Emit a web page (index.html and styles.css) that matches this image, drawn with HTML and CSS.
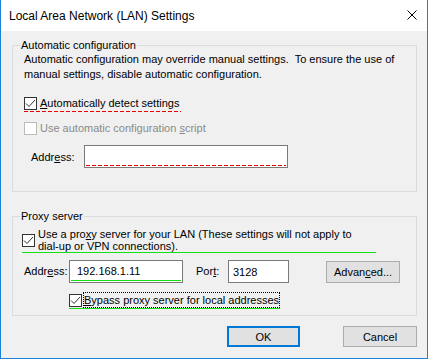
FILE: index.html
```html
<!DOCTYPE html>
<html lang="en">
<head>
    <meta charset="UTF-8">
    <title>Local Area Network (LAN) Settings</title>
    <link rel="stylesheet" href="styles.css">
</head>
<body>
    <div class="window">
        <div class="titlebar">
            <span class="title">Local Area Network (LAN) Settings</span>
            <svg class="close" width="10" height="10" viewBox="0 0 10 10">
                <path d="M0.5 0.5 L9.5 9.5 M9.5 0.5 L0.5 9.5" stroke="#000" stroke-width="1"/>
            </svg>
        </div>

        <div class="content">
            <fieldset class="group">
                <legend>Automatic configuration</legend>
                <div class="group-body group-auto">
                    <p class="note">Automatic configuration may override manual settings.&nbsp; To ensure the use of<br>manual settings, disable automatic configuration.</p>

                    <label class="check mark-red row-detect">
                        <span class="box"><svg width="11" height="11" viewBox="0 0 11 11"><polyline points="1,5.5 4,8.5 10,2" fill="none" stroke="#333" stroke-width="1"/></svg></span>
                        <span><u>A</u>utomatically detect settings</span>
                    </label>

                    <label class="check disabled row-script">
                        <span class="box"></span>
                        <span>Use automatic configuration <u>s</u>cript</span>
                    </label>

                    <div class="field-row row-auto-addr">
                        <span class="auto-addr-label">Addr<u>e</u>ss:</span>
                        <span class="field auto-addr"><span class="line-red"></span></span>
                    </div>
                </div>
            </fieldset>

            <fieldset class="group group-second">
                <legend>Proxy server</legend>
                <div class="group-body group-proxy">
                    <label class="check mark-green row-proxy">
                        <span class="box"><svg width="11" height="11" viewBox="0 0 11 11"><polyline points="1,5.5 4,8.5 10,2" fill="none" stroke="#333" stroke-width="1"/></svg></span>
                        <span class="proxy-text">Use a pro<u>x</u>y server for your LAN (These settings will not apply to<br>dial-up or VPN connections).</span>
                    </label>

                    <div class="field-row row-proxy-addr">
                        <span class="proxy-addr-label">Addr<u>e</u>ss:</span>
                        <span class="field proxy-addr">
                            <span class="value">192.168.1.11</span>
                            <span class="line-green"></span>
                        </span>
                        <span class="port-label">Por<u>t</u>:</span>
                        <span class="field port">3128</span>
                        <button class="btn btn-advanced">Advan<u>c</u>ed...</button>
                    </div>

                    <label class="check mark-green row-bypass">
                        <span class="box"><svg width="11" height="11" viewBox="0 0 11 11"><polyline points="1,5.5 4,8.5 10,2" fill="none" stroke="#333" stroke-width="1"/></svg></span>
                        <span class="focus"><u>B</u>ypass proxy server for local addresses</span>
                    </label>
                </div>
            </fieldset>

            <div class="buttons">
                <button class="btn btn-default">OK</button>
                <button class="btn">Cancel</button>
            </div>
        </div>
    </div>
</body>
</html>
```

FILE: styles.css
```css
* {
    box-sizing: border-box;
}
body {
    margin: 0;
    font-family: "Liberation Sans", Arial, sans-serif;
    font-size: 11px;
    color: #000;
}
u {
    text-decoration-thickness: 1px;
    text-underline-offset: 1px;
}
.window {
    width: 428px;
    height: 359px;
    background: #f0f0f0;
    border: 1px solid #1a82d8;
    border-top: 0;
}
.titlebar {
    height: 31px;
    background: #fff;
    display: flex;
    justify-content: space-between;
    align-items: flex-start;
    padding: 9px 10px 0 8px;
    font-size: 12px;
    line-height: 15px;
}
.close {
    margin-top: 1px;
}
.content {
    padding: 0 10px 0 11px;
}
.group {
    margin: 7px 0 0;
    padding: 0;
    border: 1px solid #dcdcdc;
    min-width: 0;
}
.group legend {
    margin-left: 7px;
    padding: 0 1px;
    line-height: 15px;
}
.group-second {
    margin-top: 17px;
}
.group-body {
    padding: 0 10px 0 11px;
}
.group-auto {
    padding-bottom: 23px;
}
.group-proxy {
    padding-bottom: 6px;
}
.note {
    margin: -1px 0 0;
    line-height: 15px;
}

/* checkboxes */
.check {
    display: flex;
    align-items: center;
    gap: 3px;
    line-height: 15px;
}
.box {
    flex: none;
    width: 13px;
    height: 13px;
    border: 1px solid #333;
    background: #fff;
    display: flex;
}
.check.disabled {
    color: #8a8a8a;
}
.check.disabled .box {
    border-color: #bcbcbc;
}
.mark-red {
    background: repeating-linear-gradient(90deg, #e00 0 4px, transparent 4px 6px) left bottom / 100% 1px no-repeat;
}
.mark-green {
    background: linear-gradient(#14e014, #14e014) left bottom / 100% 1px no-repeat;
}
.row-detect {
    display: inline-flex;
    margin-top: 14px;
    padding: 0 2px 1px 0;
}
.row-script {
    margin-top: 9px;
}
.row-proxy {
    width: 354px;
    margin: 4px 0 0 -2px;
    padding-bottom: 1px;
    line-height: 12px;
}
.row-bypass {
    display: inline-flex;
    margin: 9px 0 0 45px;
    gap: 1px;
    padding-bottom: 1px;
    line-height: 14px;
}
.focus {
    border: 1px dotted #000;
}

/* text fields */
.field-row {
    display: flex;
    align-items: center;
}
.field {
    height: 23px;
    border: 1px solid #7a7a7a;
    background: #fff;
}
.row-auto-addr {
    margin-top: 9px;
}
.auto-addr-label {
    width: 53px;
    margin-left: 7px;
}
.auto-addr {
    width: 204px;
    display: flex;
    align-items: flex-end;
    padding: 0 1px 1px;
}
.line-red {
    flex: 1;
    height: 1px;
    background: repeating-linear-gradient(90deg, #e00 0 4px, transparent 4px 6px);
}
.row-proxy-addr {
    margin-top: 7px;
    align-items: flex-start;
}
.proxy-addr-label {
    width: 45px;
    line-height: 23px;
}
.proxy-addr {
    width: 114px;
    display: flex;
    flex-direction: column;
    padding: 0 1px 1px;
}
.proxy-addr .value {
    flex: 1;
    display: flex;
    align-items: center;
    padding-left: 6px;
}
.line-green {
    height: 1px;
    background: #14e014;
}
.port-label {
    width: 32px;
    margin-left: 13px;
    line-height: 23px;
}
.port {
    width: 61px;
    display: flex;
    align-items: center;
    padding-left: 4px;
}

/* buttons */
.btn {
    font: inherit;
    color: #000;
    height: 21px;
    border: 1px solid #adadad;
    background: #e1e1e1;
    padding: 0;
}
.btn-advanced {
    width: 74px;
    height: 22px;
    margin: 1px 0 0 37px;
}
.buttons {
    display: flex;
    justify-content: flex-end;
    gap: 43px;
    margin-top: 10px;
}
.buttons .btn {
    width: 74px;
}
.buttons .btn-default {
    width: 73px;
    border: 2px solid #0078d7;
}
```
